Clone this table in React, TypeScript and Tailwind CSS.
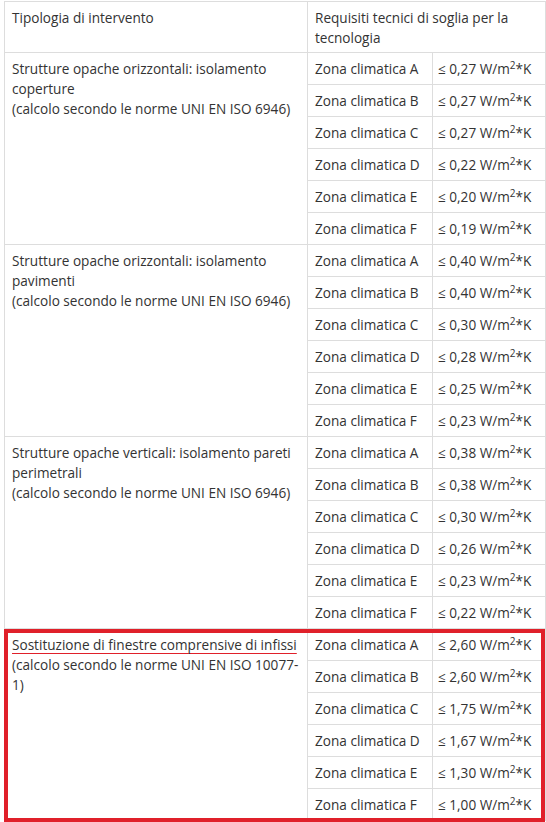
import React from "react";

type Group = { title: React.ReactNode; values: string[] };

const zones = ["A", "B", "C", "D", "E", "F"];

const groups: Group[] = [
  {
    title: (
      <>
        Strutture opache orizzontali: isolamento coperture
        <br />
        (calcolo secondo le norme UNI EN ISO 6946)
      </>
    ),
    values: ["0,27", "0,27", "0,27", "0,22", "0,20", "0,19"],
  },
  {
    title: (
      <>
        Strutture opache orizzontali: isolamento pavimenti
        <br />
        (calcolo secondo le norme UNI EN ISO 6946)
      </>
    ),
    values: ["0,40", "0,40", "0,30", "0,28", "0,25", "0,23"],
  },
  {
    title: (
      <>
        Strutture opache verticali: isolamento pareti perimetrali
        <br />
        (calcolo secondo le norme UNI EN ISO 6946)
      </>
    ),
    values: ["0,38", "0,38", "0,30", "0,26", "0,23", "0,22"],
  },
  {
    title: (
      <>
        <span className="underline decoration-[#e0202a] decoration-1 underline-offset-[3px]">
          Sostituzione di finestre comprensive di infissi
        </span>
        <br />
        (calcolo secondo le norme UNI EN ISO 10077-1)
      </>
    ),
    values: ["2,60", "2,60", "1,75", "1,67", "1,30", "1,00"],
  },
];

export default function App() {
  return (
    <div
      className="relative bg-white text-[13.6px] leading-[20px] text-[#333333]"
      style={{ fontFamily: '"Open Sans", "Noto Sans", sans-serif', width: 546, height: 822 }}
    >
      <div className="pl-[4px] pt-[1px]">
        <table className="w-[541px] table-fixed border-collapse">
          <colgroup>
            <col className="w-[303px]" />
            <col className="w-[125px]" />
            <col className="w-[113px]" />
          </colgroup>
          <thead>
            <tr className="h-[50px]">
              <th className="border border-[#dddddd] px-[7px] pt-[6px] pb-[4px] text-left align-top font-normal">
                Tipologia di intervento
              </th>
              <th
                colSpan={2}
                className="border border-[#dddddd] px-[7px] pt-[6px] pb-[4px] text-left align-top font-normal"
              >
                Requisiti tecnici di soglia per la tecnologia
              </th>
            </tr>
          </thead>
          <tbody>
            {groups.map((g, gi) =>
              zones.map((z, zi) => (
                <tr key={`${gi}-${zi}`} className="h-[32px]">
                  {zi === 0 && (
                    <td
                      rowSpan={6}
                      className="border border-[#dddddd] px-[7px] pt-[6px] align-top"
                    >
                      {g.title}
                    </td>
                  )}
                  <td className="border border-[#dddddd] px-[7px] align-middle whitespace-nowrap">
                    Zona climatica {z}
                  </td>
                  <td className="border border-[#dddddd] pl-[5px] pr-[2px] align-middle whitespace-nowrap">
                    ≤ {g.values[zi]} W/m<sup className="text-[10px]">2</sup>*K
                  </td>
                </tr>
              ))
            )}
          </tbody>
        </table>
      </div>
      <div className="pointer-events-none absolute left-[4px] top-[629px] h-[193px] w-[541px] border-[4px] border-[#e0202a]" />
    </div>
  );
}
